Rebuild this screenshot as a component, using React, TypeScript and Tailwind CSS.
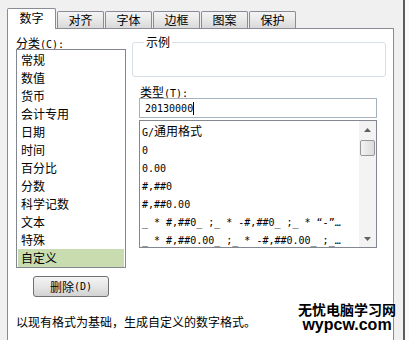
import React from "react";

const A = ({ children }: { children: React.ReactNode }) => (
  <span className="font-['DejaVu_Sans_Mono','Liberation_Mono',monospace] text-[10px]">{children}</span>
);

const categories = [
  "常规",
  "数值",
  "货币",
  "会计专用",
  "日期",
  "时间",
  "百分比",
  "分数",
  "科学记数",
  "文本",
  "特殊",
  "自定义",
];

const formats: React.ReactNode[] = [
  <>
    <A>G/</A>通用格式
  </>,
  <A>0</A>,
  <A>0.00</A>,
  <A>#,##0</A>,
  <A>#,##0.00</A>,
  <A>{"_ * #,##0_ ;_ * -#,##0_ ;_ * \u201c-\u201d\u2026"}</A>,
  <A>{"_ * #,##0.00_ ;_ * -#,##0.00_ ;_\u2026"}</A>,
];

const tabs = ["对齐", "字体", "边框", "图案", "保护"];

export default function App() {
  return (
    <div className="w-[409px] h-[340px] bg-[#f0f0f0] flex overflow-hidden relative font-['Noto_Sans_CJK_SC',sans-serif] text-[12px] text-black">
      <div className="w-[403px] pt-[8px] pl-[7px] flex flex-col">
        {/* tabs */}
        <div className="h-[20px] flex items-end">
          <div className="relative z-10 w-[49px] h-[21px] mb-[-1px] bg-white border border-b-0 border-[#898c95] rounded-t-[2px] flex items-center justify-center leading-[12px] pb-[2px]">
            数字
          </div>
          {tabs.map((t) => (
            <div
              key={t}
              className="ml-[1px] w-[47px] h-[17px] border border-b-0 border-[#898c95] rounded-t-[2px] bg-gradient-to-b from-[#f4f4f4] via-[#e8e8e8] to-[#d9d9d9] flex items-center justify-center leading-[12px]"
            >
              {t}
            </div>
          ))}
        </div>
        {/* panel */}
        <div className="w-[387px] flex-1 border border-b-0 border-[#898c95] bg-white flex flex-col">
          <div className="flex pt-[7px] pl-[8px]">
            {/* left column */}
            <div className="w-[110px] flex flex-col">
              <div className="h-[13px] leading-[13px]">
                分类<A>(C):</A>
              </div>
              <div className="h-[219px] border border-[#828790] p-[1px] flex flex-col">
                {categories.map((c, i) => (
                  <div
                    key={c}
                    className={
                      "h-[18px] leading-[18px] pl-[3px] " +
                      (i === categories.length - 1 ? "bg-[#c8dcb0]" : "")
                    }
                  >
                    {c}
                  </div>
                ))}
              </div>
              <div className="mt-[8px] ml-[17px] w-[76px] h-[21px] border border-[#707070] rounded-[3px] bg-gradient-to-b from-[#f4f4f4] via-[#e6e6e6] to-[#d2d2d2] flex items-center justify-center leading-[12px]">
                删除<A>(D)</A>
              </div>
            </div>
            {/* right column */}
            <div className="ml-[6px] w-[254px] flex flex-col">
              <fieldset className="h-[41px] border border-[#d5dfe5] rounded-[3px]">
                <legend className="ml-[11px] px-[2px] leading-[12px]">示例</legend>
              </fieldset>
              <div className="mt-[8px] ml-[8px] h-[13px] leading-[13px]">
                类型<A>(T):</A>
              </div>
              <div className="ml-[7px] w-[238px] h-[20px] border border-[#a6b2bf] flex items-center pl-[5px]">
                <A>20130000</A>
                <span className="inline-block w-[1px] h-[13px] bg-black" />
              </div>
              <div className="ml-[7px] mt-[2px] w-[238px] h-[128px] border border-[#828790] flex">
                <div className="flex-1 flex flex-col pt-[1px] pl-[2px]">
                  {formats.map((f, i) => (
                    <div key={i} className="h-[18px] leading-[18px] whitespace-nowrap">
                      {f}
                    </div>
                  ))}
                </div>
                <div className="w-[17px] bg-[#f3f3f3] flex flex-col items-center">
                  <div className="h-[17px] w-full flex items-center justify-center">
                    <svg width="7" height="4" viewBox="0 0 7 4">
                      <path d="M0 4 L3.5 0 L7 4 Z" fill="#606060" />
                    </svg>
                  </div>
                  <div className="mt-[2px] w-[15px] h-[16px] border border-[#979797] rounded-[2px] bg-gradient-to-r from-[#f2f2f2] to-[#dcdcdc]" />
                  <div className="flex-1" />
                  <div className="h-[17px] w-full flex items-center justify-center">
                    <svg width="7" height="4" viewBox="0 0 7 4">
                      <path d="M0 0 L3.5 4 L7 0 Z" fill="#606060" />
                    </svg>
                  </div>
                </div>
              </div>
            </div>
          </div>
          <div className="pl-[8px] mt-[16px] h-[18px] leading-[18px] whitespace-nowrap">
            以现有格式为基础，生成自定义的数字格式。
          </div>
        </div>
      </div>
      <div className="w-[2px] bg-[#5c5c5c]" />
      <div className="flex-1 bg-[#fafafa]" />
      {/* watermark */}
      <div className="absolute left-[298px] top-[302px] flex flex-col items-center gap-[1px] [text-shadow:0_0_2px_#fff,0_0_2px_#fff]">
        <div className="font-bold text-[14px] leading-[14px] h-[14px]">无忧电脑学习网</div>
        <div className="font-bold text-[16px] leading-[15px] h-[15px] font-['Liberation_Sans',sans-serif]">wypcw.com</div>
      </div>
    </div>
  );
}
